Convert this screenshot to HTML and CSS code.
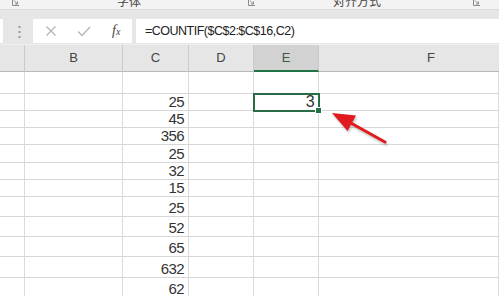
FILE: index.html
```html
<!DOCTYPE html>
<html lang="en">
<head>
    <meta charset="UTF-8">
    <meta name="viewport" content="width=device-width, initial-scale=1.0">
    <title>COUNTIF</title>
    <link rel="stylesheet" href="styles.css">
</head>
<body>
    <div class="ribbon">
        <svg class="launch first" width="7" height="7" viewBox="0 0 7 7"><path d="M0.5 0V6.5H7M2 1.5L5.5 5M5.5 2.5V5H3" fill="none" stroke="#8a8a8a" stroke-width="1"/></svg>
        <span class="group font">字体</span>
        <svg class="launch second" width="7" height="7" viewBox="0 0 7 7"><path d="M0.5 0V6.5H7M2 1.5L5.5 5M5.5 2.5V5H3" fill="none" stroke="#8a8a8a" stroke-width="1"/></svg>
        <span class="group align">对齐方式</span>
        <svg class="launch third" width="7" height="7" viewBox="0 0 7 7"><path d="M0.5 0V6.5H7M2 1.5L5.5 5M5.5 2.5V5H3" fill="none" stroke="#8a8a8a" stroke-width="1"/></svg>
    </div>

    <div class="formula-bar">
        <div class="namebox"></div>
        <svg class="grip" width="3" height="12" viewBox="0 0 3 12">
            <rect x="0.5" y="0" width="2" height="2" fill="#9a9a9a"/>
            <rect x="0.5" y="5" width="2" height="2" fill="#9a9a9a"/>
            <rect x="0.5" y="10" width="2" height="2" fill="#9a9a9a"/>
        </svg>
        <div class="buttons">
            <svg class="btn" width="12" height="12" viewBox="0 0 12 12"><path d="M1.5 1.5L10.5 10.5M10.5 1.5L1.5 10.5" stroke="#b5b5b5" stroke-width="1.3"/></svg>
            <svg class="btn" width="14" height="12" viewBox="0 0 14 12"><path d="M1 6.5L5 10.5L13 2" fill="none" stroke="#b5b5b5" stroke-width="1.3"/></svg>
            <span class="fx">f<small>x</small></span>
        </div>
        <div class="input">=COUNTIF($C$2:$C$16,C2)</div>
    </div>

    <div class="sheet">
        <div class="hd"></div>
        <div class="hd">B</div>
        <div class="hd">C</div>
        <div class="hd">D</div>
        <div class="hd active">E</div>
        <div class="hd wide">F</div>

        <div class="c"></div><div class="c"></div><div class="c"></div><div class="c"></div><div class="c"></div><div class="c"></div>
        <div class="c"></div><div class="c"></div><div class="c num">25</div><div class="c"></div><div class="c num sel">3</div><div class="c"></div>
        <div class="c"></div><div class="c"></div><div class="c num">45</div><div class="c"></div><div class="c"></div><div class="c"></div>
        <div class="c"></div><div class="c"></div><div class="c num">356</div><div class="c"></div><div class="c"></div><div class="c"></div>
        <div class="c"></div><div class="c"></div><div class="c num">25</div><div class="c"></div><div class="c"></div><div class="c"></div>
        <div class="c"></div><div class="c"></div><div class="c num">32</div><div class="c"></div><div class="c"></div><div class="c"></div>
        <div class="c"></div><div class="c"></div><div class="c num">15</div><div class="c"></div><div class="c"></div><div class="c"></div>
        <div class="c"></div><div class="c"></div><div class="c num">25</div><div class="c"></div><div class="c"></div><div class="c"></div>
        <div class="c"></div><div class="c"></div><div class="c num">52</div><div class="c"></div><div class="c"></div><div class="c"></div>
        <div class="c"></div><div class="c"></div><div class="c num">65</div><div class="c"></div><div class="c"></div><div class="c"></div>
        <div class="c"></div><div class="c"></div><div class="c num">632</div><div class="c"></div><div class="c"></div><div class="c"></div>
        <div class="c"></div><div class="c"></div><div class="c num">62</div><div class="c"></div><div class="c"></div><div class="c"></div>

        <svg class="arrow" width="70" height="50" viewBox="0 0 70 50">
            <line x1="24" y1="21" x2="60" y2="41" stroke="#e11b1d" stroke-width="3" stroke-linecap="round"/>
            <polygon points="7,12 31,14.5 22.5,30" fill="#e11b1d"/>
        </svg>
    </div>
</body>
</html>
```

FILE: styles.css
```css
html,body{
    margin:0;
    padding:0;
    width:499px;
    height:296px;
    overflow:hidden;
    background:#fff;
    font-family:"Liberation Sans", Arial, sans-serif;
    color:#333;
}
.ribbon{
    height:9px;
    background:#f3f3f3;
    border-bottom:1px solid #dcdcdc;
    display:flex;
    align-items:flex-start;
    overflow:hidden;
}
.launch{
    display:block;
    margin-top:-1px;
}
.first{
    margin-left:12px;
}
.group{
    font-family:"Noto Sans CJK SC", sans-serif;
    font-size:12px;
    line-height:14px;
    margin-top:-6px;
    color:#444;
}
.font{
    margin-left:98px;
}
.second{
    margin-left:107px;
}
.align{
    margin-left:78px;
}
.third{
    margin-left:92px;
}
.formula-bar{
    height:34px;
    background:#e6e6e6;
    display:flex;
    align-items:flex-start;
    padding-top:9px;
    box-sizing:border-box;
}
.namebox{
    width:3px;
    height:24px;
    background:#fff;
}
.grip{
    margin-left:15px;
    margin-top:7px;
}
.buttons{
    margin-left:12px;
    width:99px;
    height:24px;
    background:#fff;
    display:flex;
    align-items:center;
    box-sizing:border-box;
    padding-left:12px;
}
.btn{
    margin-right:20px;
}
.fx{
    font-family:"Liberation Serif", serif;
    font-style:italic;
    font-size:14px;
    color:#444;
    margin-left:1px;
}
.fx small{
    font-size:10px;
}
.input{
    margin-left:4px;
    flex:1;
    height:24px;
    background:#fff;
    font-size:12.5px;
    letter-spacing:-0.5px;
    line-height:24px;
    padding-left:9px;
    color:#222;
}
.sheet{
    position:relative;
    display:grid;
    grid-template-columns:25px 98px 66px 65px 65px 1fr;
    grid-template-rows:27px 22px 17px 17px 17px 18px 17px 17px 20px 20px 20px 21px 20px;
    border-top:1px solid #f0f0f0;
}
.hd{
    background:#e6e6e6;
    border-right:1px solid #c9c9c9;
    border-bottom:1px solid #b8b8b8;
    font-size:13px;
    text-align:center;
    line-height:26px;
    color:#444;
}
.hd.active{
    background:#d2d2d2;
    border-bottom:2px solid #217346;
    color:#3c5a47;
}
.hd.wide{
    padding-left:44px;
    border-right:none;
}
.c{
    border-right:1px solid #dadada;
    border-bottom:1px solid #d6d6d6;
}
.num{
    display:flex;
    align-items:flex-end;
    justify-content:flex-end;
    font-size:15px;
    letter-spacing:-0.6px;
    padding-right:4px;
    line-height:16px;
    color:#333;
}
.sel{
    position:relative;
    outline:2px solid #2b6b45;
    outline-offset:-1px;
    padding-right:4px;
    font-size:16px;
    z-index:1;
}
.sel::after{
    content:"";
    position:absolute;
    right:-4px;
    bottom:-4px;
    width:5px;
    height:5px;
    background:#217346;
    border:1px solid #fff;
}
.arrow{
    position:absolute;
    left:325px;
    top:56px;
    filter:drop-shadow(1px 2px 1px rgba(0,0,0,.25));
}
```
